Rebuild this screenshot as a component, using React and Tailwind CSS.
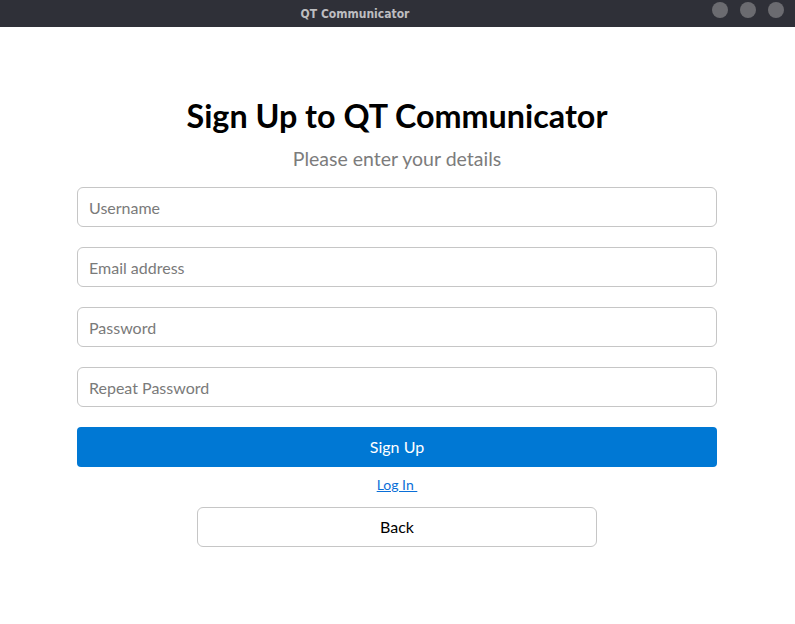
const font = { fontFamily: 'Lato, "Open Sans", sans-serif' }

function Field({ placeholder }) {
  return (
    <input
      placeholder={placeholder}
      className="h-10 w-full rounded-md border border-[#c6c6c6] bg-white px-[11px] text-[16px] text-[#333] outline-none placeholder:text-[#7a7a7a]"
    />
  )
}

export default function App() {
  return (
    <div className="flex h-[624px] w-[795px] flex-col bg-white" style={font}>
      <div className="relative flex h-[27px] shrink-0 items-center justify-center bg-[#2f3038] pr-[85px]">
        <span className="font-['DejaVu_Sans_Condensed','DejaVu_Sans',sans-serif] text-[12px] font-bold text-[#bdbdc0]">
          QT Communicator
        </span>
        <div className="absolute right-[11px] top-[2px] flex gap-[12px]">
          <span className="h-4 w-4 rounded-full bg-[#6b6b70]" />
          <span className="h-4 w-4 rounded-full bg-[#6b6b70]" />
          <span className="h-4 w-4 rounded-full bg-[#6b6b70]" />
        </div>
      </div>

      <div className="ml-[77px] flex w-[640px] flex-col items-center pt-[69px]">
        <h1 className="whitespace-nowrap text-[32.3px] font-bold leading-[40px] text-black">Sign Up to QT Communicator</h1>
        <p className="mt-[11px] text-[19.5px] leading-6 text-[#7c7c7c]">Please enter your details</p>

        <div className="mt-[16px] flex w-full flex-col gap-5">
          <Field placeholder="Username" />
          <Field placeholder="Email address" />
          <Field placeholder="Password" />
          <Field placeholder="Repeat Password" />
          <button className="h-10 w-full rounded-[4px] bg-[#0078d4] text-[16px] text-white">Sign Up</button>
        </div>

        <a href="#" className="mt-[8px] whitespace-pre text-[14px] leading-5 text-[#0a6fd8] underline">
          {'Log In '}
        </a>

        <button className="mt-[12px] h-10 w-[400px] rounded-md border border-[#c6c6c6] bg-white text-[16px] text-black">
          Back
        </button>
      </div>
    </div>
  )
}
